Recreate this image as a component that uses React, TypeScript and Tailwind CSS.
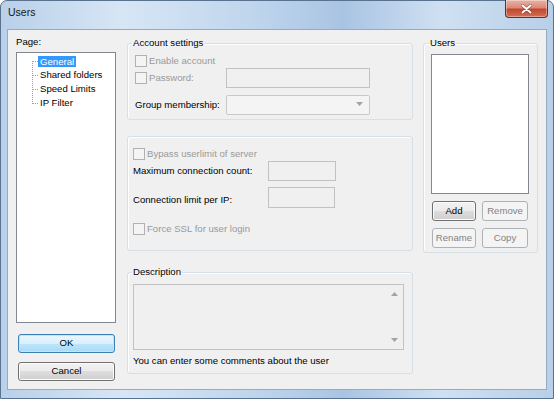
import React from "react";

type GroupProps = {
  title?: string;
  legendClass?: string;
  className?: string;
  children: React.ReactNode;
};

// Win7 style group box
const Group = ({ title, legendClass = "ml-[4px]", className = "", children }: GroupProps) => (
  <fieldset className={"border border-[#d5dfe5] rounded-[3px] shadow-[inset_1px_1px_0_#ffffff] " + className}>
    {title && <legend className={"px-[1px] leading-[12px] " + legendClass}>{title}</legend>}
    {children}
  </fieldset>
);

const Check = ({ label }: { label: string }) => (
  <div className="flex items-center h-[14px]">
    <span className="w-[12px] h-[12px] border border-[#b1b1b1] bg-[#f4f4f4] shrink-0" />
    <span className="ml-[2px] text-[#9a9a9a] leading-[12px]">{label}</span>
  </div>
);

const Btn = ({ label, w, disabled = false }: { label: string; w: string; disabled?: boolean }) =>
  disabled ? (
    <div className={"h-[20px] flex items-center justify-center rounded-[3px] border border-[#adb2b5] bg-[#f4f4f4] text-[#838383] " + w}>
      {label}
    </div>
  ) : (
    <div
      className={
        "h-[20px] flex items-center justify-center rounded-[3px] border border-[#707070] shadow-[inset_0_0_0_1px_#fcfcfc] bg-[linear-gradient(#f2f2f2_0%,#ebebeb_50%,#dddddd_50%,#cfcfcf_100%)] " +
        w
      }
    >
      {label}
    </div>
  );

const Arrow = ({ up = false }: { up?: boolean }) => (
  <svg width="7" height="4" viewBox="0 0 7 4">
    <path d={up ? "M0 4 L3.5 0 L7 4 Z" : "M0 0 L7 0 L3.5 4 Z"} fill="#a3a3a3" />
  </svg>
);

const TreeLines = () => (
  <svg width="21" height="56" viewBox="0 0 21 56" className="shrink-0" shapeRendering="crispEdges">
    <g stroke="#a0a0a0" strokeWidth="1" strokeDasharray="1 1">
      <line x1="15.5" y1="7" x2="15.5" y2="50" />
      <line x1="16" y1="7.5" x2="21" y2="7.5" />
      <line x1="16" y1="21.5" x2="21" y2="21.5" />
      <line x1="16" y1="35.5" x2="21" y2="35.5" />
      <line x1="16" y1="49.5" x2="21" y2="49.5" />
    </g>
  </svg>
);

export default function App() {
  return (
    <div className="w-[554px] h-[399px] flex flex-col border border-[#58728f] rounded-t-[7px] px-[6px] pb-[8px] bg-[linear-gradient(to_right,#b9d0e9_0%,#d7e6f5_22%,#c0d6ed_45%,#a9c4e3_62%,#cfe0f2_80%,#b8cfe8_100%)] font-['Liberation_Sans',Arial,sans-serif] text-[9.6px] text-black">
      {/* title bar */}
      <div className="h-[28px] flex items-start justify-between shrink-0">
        <div className="pl-[1px] pt-[4px] text-[10.5px] leading-[14px] text-[#151515]">Users</div>
        <div className="-mt-[1px] -mr-[1px] w-[43px] h-[18px] rounded-b-[4px] border border-[#6e2d23] border-t-0 bg-[linear-gradient(#eab2a6_0%,#d98a78_45%,#c5462d_55%,#d0715a_100%)] shadow-[inset_0_0_0_1px_rgba(255,255,255,0.35)] flex items-center justify-center">
          <svg width="11" height="10" viewBox="0 0 11 10">
            <path d="M1.5 1.5 L9.5 8.5 M9.5 1.5 L1.5 8.5" stroke="#5a1d14" strokeWidth="3" strokeLinecap="round" opacity="0.55" />
            <path d="M1.5 1.5 L9.5 8.5 M9.5 1.5 L1.5 8.5" stroke="#ffffff" strokeWidth="2" strokeLinecap="round" />
          </svg>
        </div>
      </div>

      {/* client area */}
      <div className="flex-1 border border-[#98aac1] bg-[#f0f0f0] flex">
        {/* left column */}
        <div className="ml-[8px] w-[100px] flex flex-col pt-[6px]">
          <div className="leading-[12px]">Page:</div>
          <div className="mt-[4px] h-[271px] border border-[#828790] bg-white pt-[1px] flex">
            <TreeLines />
            <div className="flex flex-col">
              <div className="h-[14px] flex items-center">
                <span className="px-[2px] leading-[11px] bg-[#3399ff] text-white">General</span>
              </div>
              <div className="h-[14px] flex items-center px-[2px]">Shared folders</div>
              <div className="h-[14px] flex items-center px-[2px]">Speed Limits</div>
              <div className="h-[14px] flex items-center px-[2px]">IP Filter</div>
            </div>
          </div>
          <div className="mt-[11px] ml-[2px] w-[97px] h-[19px] flex items-center justify-center rounded-[3px] border border-[#3c7fb1] shadow-[inset_0_0_0_1px_#bfe7fb] bg-[linear-gradient(#eaf6fd_0%,#d9f0fc_50%,#bee6fd_50%,#a7d9f5_100%)]">
            OK
          </div>
          <div className="mt-[9px] ml-[2px] w-[97px] h-[19px] flex items-center justify-center rounded-[3px] border border-[#707070] shadow-[inset_0_0_0_1px_#fcfcfc] bg-[linear-gradient(#f2f2f2_0%,#ebebeb_50%,#dddddd_50%,#cfcfcf_100%)]">
            Cancel
          </div>
        </div>

        {/* middle column */}
        <div className="ml-[11px] w-[286px] pt-[7px] flex flex-col">
          <Group title="Account settings">
            <div className="pl-[7px] pt-[5px] pb-[4px]">
              <Check label="Enable account" />
              <div className="flex items-center h-[20px]">
                <div className="w-[91px]">
                  <Check label="Password:" />
                </div>
                <div className="w-[144px] h-[20px] border border-[#c2c2c2] bg-[#f0f0f0]" />
              </div>
              <div className="flex items-center h-[20px] mt-[7px]">
                <span className="w-[91px] leading-[12px]">Group membership:</span>
                <div className="w-[144px] h-[20px] border border-[#c9c9c9] rounded-[2px] bg-[#f4f4f4] flex items-center justify-end pr-[6px] pb-[3px]">
                  <Arrow />
                </div>
              </div>
            </div>
          </Group>

          <Group className="mt-[16px]">
            <div className="pl-[5px] pt-[10px] pb-[14px]">
              <Check label="Bypass userlimit of server" />
              <div className="flex items-center h-[20px]">
                <span className="w-[135px] leading-[12px]">Maximum connection count:</span>
                <div className="w-[68px] h-[20px] border border-[#c2c2c2] bg-[#f0f0f0]" />
              </div>
              <div className="flex items-center h-[21px] mt-[6px]">
                <span className="w-[135px] leading-[12px] pt-[5px]">Connection limit per IP:</span>
                <div className="w-[67px] h-[21px] border border-[#c2c2c2] bg-[#f0f0f0]" />
              </div>
              <div className="mt-[14px]">
                <Check label="Force SSL for user login" />
              </div>
            </div>
          </Group>

          <Group title="Description" className="mt-[15px]">
            <div className="pl-[5px] pt-[6px] pb-[6px]">
              <div className="w-[271px] h-[66px] border border-[#c2c2c2] bg-[#f0f0f0] flex justify-end">
                <div className="w-[17px] flex flex-col items-center justify-between py-[7px]">
                  <Arrow up />
                  <Arrow />
                </div>
              </div>
              <div className="mt-[5px] leading-[12px]">You can enter some comments about the user</div>
            </div>
          </Group>
        </div>

        {/* users column */}
        <div className="ml-[10px] w-[115px] pt-[7px]">
          <Group title="Users" legendClass="ml-[5px]">
            <div className="pl-[7px] pt-[5px] pb-[4px]">
              <div className="w-[98px] h-[140px] border border-[#828790] bg-white" />
              <div className="flex mt-[7px] ml-[1px] gap-[6px]">
                <Btn label="Add" w="w-[44px]" />
                <Btn label="Remove" w="w-[46px]" disabled />
              </div>
              <div className="flex mt-[7px] ml-[1px] gap-[6px]">
                <Btn label="Rename" w="w-[44px]" disabled />
                <Btn label="Copy" w="w-[46px]" disabled />
              </div>
            </div>
          </Group>
        </div>
      </div>
    </div>
  );
}
